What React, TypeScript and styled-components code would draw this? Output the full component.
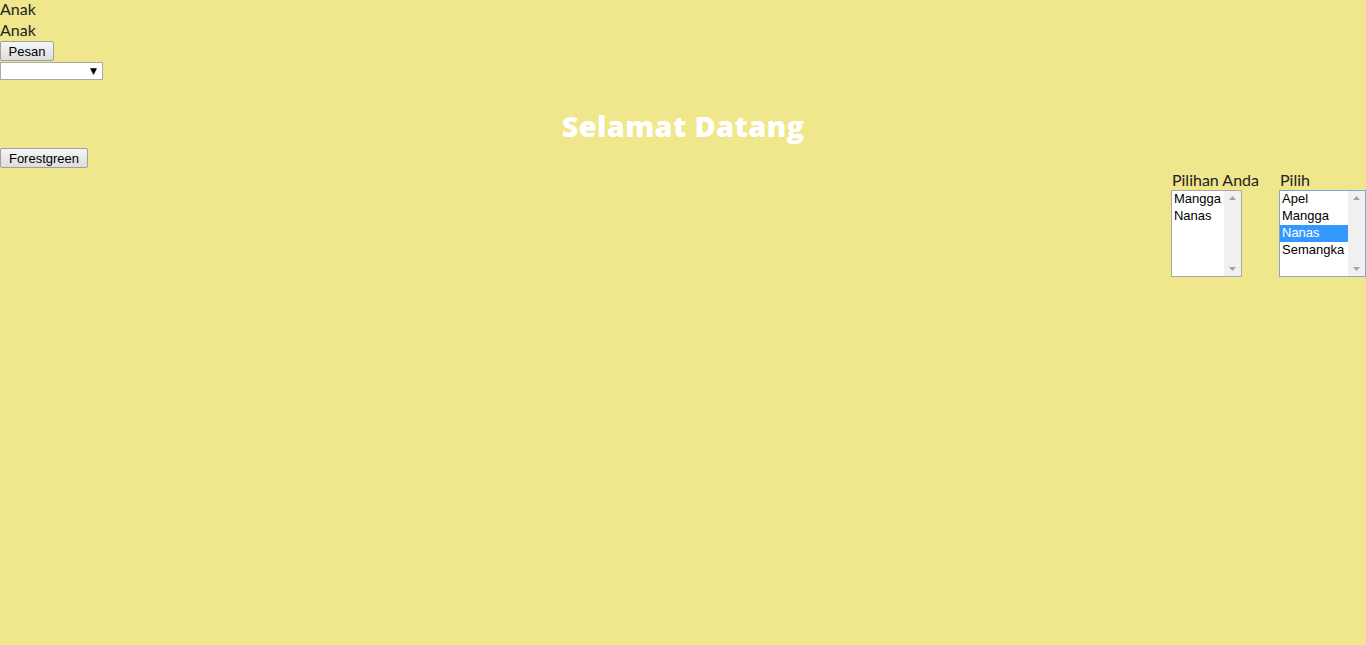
import React from "react";
import styled, { createGlobalStyle } from "styled-components";

const Global = createGlobalStyle`
  html, body { margin: 0; padding: 0; background: #f0e68c; }
  body { font-family: "Lato", "Open Sans", sans-serif; font-size: 16px; color: #222; }
`;

const Page = styled.div`
  min-height: 645px;
  background: #f0e68c;
`;

const Line = styled.div`
  height: 20.5px;
  line-height: 17px;
  font-size: 16px;
`;

const Button = styled.button<{ $w: number }>`
  display: block;
  box-sizing: border-box;
  width: ${(p) => p.$w}px;
  height: 20px;
  margin: 0;
  padding: 0 6px;
  font-family: "Liberation Sans", Arial, sans-serif;
  font-size: 13px;
  color: #000;
  background: linear-gradient(#f6f6f6, #dddddd);
  border: 1px solid #a0a0a0;
  border-radius: 2px;
  text-align: center;
`;

const Select = styled.div`
  box-sizing: border-box;
  width: 103px;
  height: 18px;
  margin-top: 1px;
  background: #fff;
  border: 1px solid #a9a9a9;
  display: flex;
  justify-content: flex-end;
  align-items: center;
  padding-right: 5px;
  font-size: 9px;
  font-family: "DejaVu Sans", sans-serif;
  color: #000;
`;

const Heading = styled.h1`
  margin: 0;
  padding-top: 26px;
  height: 40px;
  margin-bottom: 2px;
  line-height: 40px;
  text-align: center;
  color: #fff;
  font-family: "Open Sans", sans-serif;
  font-weight: 800;
  font-size: 29px;
  letter-spacing: 0.35px;
`;

const Right = styled.div`
  display: flex;
  justify-content: flex-end;
  gap: 20px;
  margin-top: 2px;
`;

const Group = styled.div`
  display: flex;
  flex-direction: column;
`;

const Label = styled.div`
  height: 20px;
  line-height: 20px;
  padding-left: 1px;
  font-size: 16px;
`;

const ListBox = styled.div<{ $w: number; $focus?: boolean }>`
  box-sizing: border-box;
  width: ${(p) => p.$w}px;
  height: 87px;
  background: #fff;
  border: 1px solid ${(p) => (p.$focus ? "#7ea6d6" : "#a9a9a9")};
  display: flex;
`;

const Items = styled.div`
  flex: 1;
`;

const Item = styled.div<{ $sel?: boolean }>`
  height: 17px;
  line-height: 15px;
  padding-left: 2px;
  font-family: "Liberation Sans", Arial, sans-serif;
  font-size: 13px;
  color: ${(p) => (p.$sel ? "#fff" : "#000")};
  background: ${(p) => (p.$sel ? "#3399ff" : "transparent")};
  white-space: nowrap;
`;

const Scroll = styled.div`
  width: 17px;
  background: #f0f0f0;
  display: flex;
  flex-direction: column;
  justify-content: space-between;
  align-items: center;
  padding: 5px 0;
  box-sizing: border-box;
`;

const Arrow = ({ up }: { up?: boolean }) => (
  <svg width="7" height="4" viewBox="0 0 7 4">
    <polygon points={up ? "0,4 7,4 3.5,0" : "0,0 7,0 3.5,4"} fill="#a3a3a3" />
  </svg>
);

const List = ({ w, items, sel, focus }: { w: number; items: string[]; sel?: string; focus?: boolean }) => (
  <ListBox $w={w} $focus={focus}>
    <Items>
      {items.map((i) => (
        <Item key={i} $sel={i === sel}>{i}</Item>
      ))}
    </Items>
    <Scroll>
      <Arrow up />
      <Arrow />
    </Scroll>
  </ListBox>
);

export default function App() {
  return (
    <Page>
      <Global />
      <Line>Anak</Line>
      <Line>Anak</Line>
      <Button $w={54}>Pesan</Button>
      <Select>▼</Select>
      <Heading>Selamat Datang</Heading>
      <Button $w={88}>Forestgreen</Button>
      <Right>
        <Group>
          <Label>Pilihan Anda</Label>
          <List w={71} items={["Mangga", "Nanas"]} />
        </Group>
        <Group>
          <Label>Pilih</Label>
          <List w={87} items={["Apel", "Mangga", "Nanas", "Semangka"]} sel="Nanas" focus />
        </Group>
      </Right>
    </Page>
  );
}
